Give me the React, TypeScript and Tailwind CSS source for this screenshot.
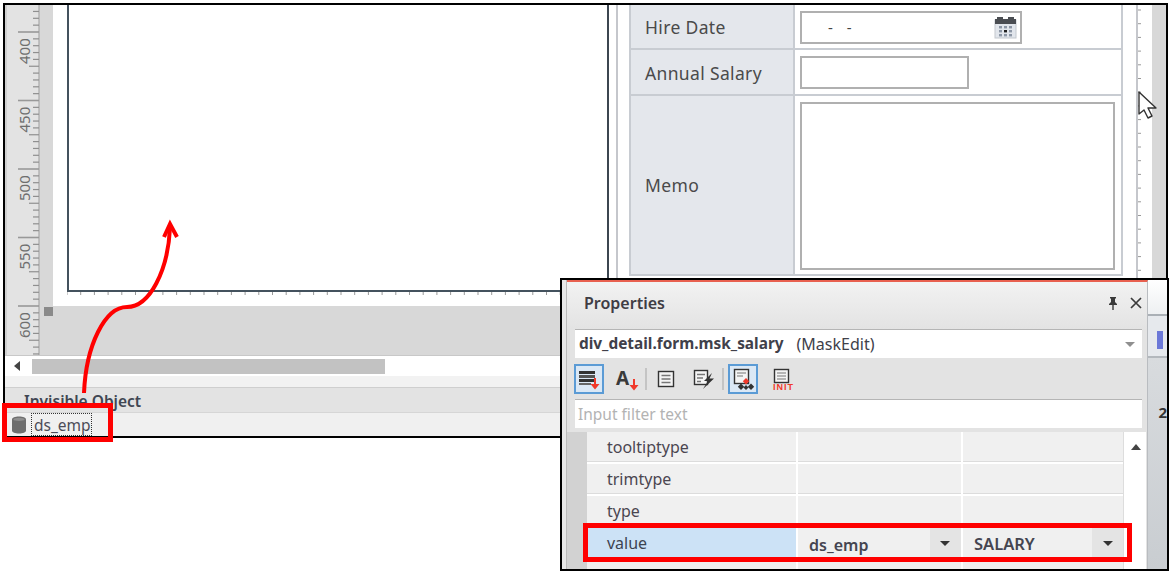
import React from "react";

function VRuler() {
  const ticks: React.ReactNode[] = [];
  for (let i = -3; i < 48; i++) {
    const y = 32 + i * 6.85;
    const major = i % 10 === 0;
    const mid = !major && i % 5 === 0;
    const x1 = major ? 13 : mid ? 24 : 28;
    ticks.push(<line key={i} x1={x1} x2={34} y1={y - 5} y2={y - 5} stroke={major ? "#999" : "#8f8f8f"} strokeWidth={major ? 1.6 : 1.2} />);
  }
  const labels = [400, 450, 500, 550, 600];
  return (
    <svg width="48" height="350" className="block shrink-0">
      <rect x="0" y="0" width="34" height="350" fill="#e3e3e3" />
      <rect x="34" y="0" width="14" height="350" fill="#d8d8d8" />
      <line x1="34" x2="34" y1="0" y2="350" stroke="#a8a8a8" strokeWidth="1.2" />
      <line x1="1" x2="1" y1="0" y2="350" stroke="#bdbdbd" />
      {ticks}
      {labels.map((l, i) => {
        const y = 59 + i * 68.5;
        return (
          <text key={l} x={24.5} y={y} transform={`rotate(-90 24.5 ${y})`} fontSize="15" fill="#6f6f6f" fontFamily="Noto Sans, sans-serif">
            {l}
          </text>
        );
      })}
    </svg>
  );
}

function Calendar() {
  return (
    <svg width="23" height="23" viewBox="0 0 23 23">
      <rect x="1" y="4" width="21" height="18" fill="#e2e6ec" stroke="#c3c8ce" />
      <rect x="1" y="3" width="21" height="5" fill="#4a4d52" />
      <rect x="3" y="1" width="6" height="3" fill="#4a4d52" />
      <rect x="14" y="1" width="6" height="3" fill="#4a4d52" />
      {[5, 10, 15].map((x) =>
        [10, 14, 18].map((y) => (
          <rect key={`${x}-${y}`} x={x} y={y} width="3" height="2.4" fill={x === 10 && y === 14 ? "#222" : "#8d97a6"} />
        ))
      )}
    </svg>
  );
}

function Cursor() {
  return (
    <svg width="22" height="30" viewBox="0 0 22 30" className="absolute left-[1137px] top-[90px]">
      <path d="M2 2 L2 24 L7 20 L11 28 L15 26 L11 18 L19 18 Z" fill="#fff" stroke="#333" strokeWidth="1.4" strokeLinejoin="round" />
    </svg>
  );
}

function RedDown({ x, y }: { x: number; y: number }) {
  return <path d={`M${x - 1} ${y} h2 v6 h3.5 l-4.5 5.5 l-4.5 -5.5 h3.5 z`} fill="#f0392b" />;
}

function Toolbar() {
  return (
    <div className="flex items-center h-[33px] ml-[7px] mt-[4px]">
      <div className="w-[30px] h-[30px] border-2 border-[#5b9bd5] bg-[#dbe8f5] flex items-center justify-center">
        <svg width="26" height="26" viewBox="0 0 26 26">
          <rect x="3" y="5" width="16" height="3" fill="#333" />
          <rect x="3" y="9" width="16" height="3" fill="#555" />
          <rect x="3" y="13" width="16" height="3" fill="#333" />
          <rect x="3" y="17" width="12" height="2" fill="#666" />
          <RedDown x={19} y={12} />
        </svg>
      </div>
      <svg width="28" height="28" viewBox="0 0 28 28" className="ml-[11px]">
        <text x="1" y="20" fontSize="19" fontWeight="700" fill="#3a3a3a" fontFamily="Noto Sans, sans-serif">A</text>
        <RedDown x={19} y={14} />
      </svg>
      <div className="w-[2px] h-[22px] bg-[#c4c4c4] ml-[2px]" />
      <svg width="20" height="20" viewBox="0 0 20 20" className="ml-[9px]">
        <rect x="2.5" y="2.5" width="15" height="15" fill="#f4f4f4" stroke="#333" strokeWidth="1.4" />
        <path d="M5.5 6.5h9M5.5 10h9M5.5 13.5h9" stroke="#777" strokeWidth="1.3" />
      </svg>
      <svg width="22" height="22" viewBox="0 0 22 22" className="ml-[17px]">
        <rect x="1.5" y="2.5" width="13" height="14" fill="#f4f4f4" stroke="#333" strokeWidth="1.4" />
        <path d="M4 6.5h8M4 10h6M4 13.5h4" stroke="#777" strokeWidth="1.3" />
        <path d="M19 5 L11 13 H15 L10 21 L21 10.5 H16.5 Z" fill="#333" />
      </svg>
      <div className="w-[2px] h-[22px] bg-[#c4c4c4] ml-[7px]" />
      <div className="w-[30px] h-[30px] border-2 border-[#5b9bd5] bg-[#dbe8f5] flex items-center justify-center ml-[4px]">
        <svg width="26" height="26" viewBox="0 0 26 26">
          <rect x="4.5" y="3.5" width="14" height="14" fill="#f4f4f4" stroke="#333" strokeWidth="1.4" />
          <path d="M7 7h9M7 10h6" stroke="#777" strokeWidth="1.2" />
          <path d="M16 12l3.2 3.2-3.2 3.2-3.2-3.2z" fill="#f0392b" />
          <path d="M11 17.5l3.2 3.2-3.2 3.2-3.2-3.2zM21 17.5l3.2 3.2-3.2 3.2-3.2-3.2zM16 19l2.5 2.5-2.5 2.5-2.5-2.5z" fill="#333" />
        </svg>
      </div>
      <svg width="24" height="24" viewBox="0 0 24 24" className="ml-[13px]">
        <rect x="3.5" y="2.5" width="14" height="13" fill="#f4f4f4" stroke="#333" strokeWidth="1.4" />
        <path d="M6 6h9M6 9h9M6 12h9" stroke="#777" strokeWidth="1.2" />
        <text x="2" y="23" fontSize="9" fontWeight="700" fill="#f0392b" textLength="20" fontFamily="Liberation Sans, sans-serif">INIT</text>
      </svg>
    </div>
  );
}

function Caret({ color = "#333" }: { color?: string }) {
  return <div className="w-0 h-0 border-l-[5px] border-r-[5px] border-t-[5px] border-l-transparent border-r-transparent" style={{ borderTopColor: color }} />;
}

function PropRow({ name }: { name: string }) {
  return (
    <div className="flex h-[30px] gap-[2px]">
      <div className="w-[209px] bg-[#f0f0f0] border-b border-[#dcdcdc] pl-[20px] pt-[1px] flex items-center text-[16px] text-[#4b4650]">{name}</div>
      <div className="w-[163px] bg-[#f0f0f0] border-b border-[#dcdcdc]" />
      <div className="flex-1 bg-[#f0f0f0] border-b border-[#dcdcdc]" />
    </div>
  );
}

function ValCell({ text, w, size }: { text: string; w: string; size: string }) {
  return (
    <div className={`${w} bg-[#f0f0f0] flex items-stretch`}>
      <div className={`flex-1 pl-[11px] flex items-center ${size} font-semibold text-[#454550] pt-[3px]`}>{text}</div>
      <div className="w-[31px] bg-[#e4e4e4] flex items-center justify-center"><Caret /></div>
    </div>
  );
}

function Properties() {
  return (
    <div className="absolute left-[560px] top-[278px] w-[609px] h-[293px] border-2 border-black bg-[#c9cdd1] flex">
      <div className="w-[5px] bg-[#e8e8e8] border-r border-[#bbbbbb]" />
      <div className="w-[584px] bg-[#e3e3e3] border-t-2 border-[#e8604f] border-r border-r-[#b9bcc0] flex flex-col">
        <div className="h-[47px] bg-gradient-to-b from-[#f2f2f2] to-[#e3e3e3] flex items-center justify-between pl-[17px] pr-[9px] pb-[6px]">
          <span className="text-[16px] font-semibold text-[#3f3d44] leading-none">Properties</span>
          <div className="flex items-center gap-[9px] mr-[-5px]">
            <svg width="14" height="14" viewBox="0 0 14 14">
              <path d="M4 1h6v1l-1 1v3l2 2v1H3V8l2-2V3L4 2zM6.3 9h1.4v5H6.3z" fill="#3a3a3a" />
            </svg>
            <svg width="14" height="14" viewBox="0 0 14 14">
              <path d="M2 2l10 10M12 2L2 12" stroke="#3a3a3a" strokeWidth="1.7" />
            </svg>
          </div>
        </div>
        <div className="ml-[8px] mr-[5px] h-[29px] bg-white border-t border-[#b5b5b5] flex items-center pl-[4px] pr-[7px] text-[#40404a]">
          <span className="font-bold text-[15.4px]">div_detail.form.msk_salary</span>
          <span className="ml-[13px] text-[16px]">(MaskEdit)</span>
          <div className="ml-auto"><Caret color="#8f8f8f" /></div>
        </div>
        <Toolbar />
        <div className="ml-[8px] mr-[5px] mt-[4px] h-[29px] bg-white border-t border-[#b5b5b5] flex items-center pl-[3px] pt-[1px] text-[15.5px] text-[#b3b3b3]">Input filter text</div>
        <div className="flex flex-1 mt-[4px] overflow-hidden">
          <div className="w-[20px] bg-[#d2d2d2]" />
          <div className="flex-1 bg-white flex flex-col gap-[2px]">
            <PropRow name="tooltiptype" />
            <PropRow name="trimtype" />
            <PropRow name="type" />
            <div className="flex h-[30px] gap-[2px]">
              <div className="w-[209px] bg-[#cce2f6] pl-[20px] flex items-center text-[16px] text-[#3d4450]">value</div>
              <ValCell text="ds_emp" w="w-[163px]" size="text-[16px]" />
              <ValCell text="SALARY" w="flex-1" size="text-[16.5px]" />
            </div>
            <div className="flex flex-1 gap-[2px]">
              <div className="w-[209px] bg-[#f0f0f0]" />
              <div className="w-[163px] bg-[#f0f0f0]" />
              <div className="flex-1 bg-[#f0f0f0]" />
            </div>
          </div>
          <div className="w-[23px] bg-white pt-[12px] pl-[1px] flex justify-center shrink-0 border-l border-[#dddddd] mr-[1px]">
            <div className="w-0 h-0 border-l-[5px] border-r-[5px] border-b-[6px] border-l-transparent border-r-transparent border-b-[#444]" />
          </div>
        </div>
      </div>
      <div className="flex-1 flex flex-col">
        <div className="h-[36px] bg-gradient-to-b from-[#ffffff] to-[#eef0f2] border-b-2 border-[#aab0b6]" />
        <div className="h-[42px] bg-[#e6e9ed] border-b-2 border-[#b3b8bd] pt-[15px]">
          <div className="ml-[9px] w-[6px] h-[18px] bg-[#6b78d8]" />
        </div>
        <div className="flex-1 bg-gradient-to-b from-[#d8dbde] to-[#c9cdd1] pl-[10px] pt-[47px] text-[15px] font-bold text-[#333] leading-none overflow-hidden">2</div>
      </div>
    </div>
  );
}

function LeftPane() {
  const ticks = Array.from({ length: 40 }, (_, i) => i * 13.7);
  return (
    <div className="w-[602px] shrink-0 flex flex-col">
      <div className="flex h-[350px]">
        <VRuler />
        <div className="flex-1 flex flex-col">
          <div className="h-[301px] bg-white pl-[14px]">
            <div className="h-[287px] border-l-2 border-b-2 border-[#44525e]" />
            <svg width="540" height="4" className="block">
              {ticks.map((t) => (
                <line key={t} x1={t} x2={t} y1="0" y2="3" stroke="#999" />
              ))}
            </svg>
          </div>
          <div className="flex-1 bg-[#d8d8d8]" />
        </div>
      </div>
      <div className="h-[22px] bg-white border-t border-[#c8c8c8] flex items-center pl-[5px]">
        <div className="w-[14px] flex justify-center">
          <div className="w-0 h-0 border-t-[5px] border-b-[5px] border-r-[6px] border-t-transparent border-b-transparent border-r-[#444]" />
        </div>
        <div className="ml-[8px] w-[353px] h-[15px] bg-[#c2c2c2]" />
      </div>
      <div className="h-[11px] bg-[#f2f2f2]" />
      <div className="h-[25px] bg-[#e3e3e3] border-t border-[#cfcfcf] pl-[19px] pt-[3px] flex items-center text-[15.5px] font-semibold text-[#3f4652]">Invisible Object</div>
      <div className="flex-1 bg-[#f0f0f0] border-t border-[#d6d6d6] flex items-center pl-[7px]">
        <svg width="14" height="18" viewBox="0 0 14 18" className="shrink-0">
          <path d="M0 3.5C0 1.5 3 0.5 7 0.5S14 1.5 14 3.5V14.5C14 16.5 11 17.5 7 17.5S0 16.5 0 14.5Z" fill="#6e6e6e" />
          <ellipse cx="7" cy="3.4" rx="5.6" ry="1.7" fill="#8f8f8f" />
        </svg>
        <div className="ml-[5px] h-[23px] w-[61px] border border-dotted border-[#333] flex items-center pl-[2px] pt-[2px] text-[15.5px] text-[#4c4c58]">ds_emp</div>
      </div>
    </div>
  );
}

function FormRow({ label, h, pt, children }: { label: string; h: string; pt: string; children: React.ReactNode }) {
  return (
    <div className={`flex ${h} border-b-2 border-[#c8ccd2]`}>
      <div className={`w-[164px] bg-[#e4e7ec] border-r-2 border-[#c8ccd2] pl-[14px] ${pt} flex items-center text-[17.5px] tracking-[0.35px] text-[#4a4a4a]`}>{label}</div>
      <div className="flex-1 bg-white pl-[5px]">{children}</div>
    </div>
  );
}

function RightPane() {
  return (
    <div className="flex-1 flex bg-white border-l-2 border-[#3c4650]">
      <div className="w-[7px]" />
      <div className="w-[2px] bg-[#c5c7cc]" />
      <div className="w-[11px]" />
      <div className="w-[494px] h-[271px] border-l-2 border-r-2 border-[#c8ccd2]">
        <FormRow label="Hire Date" h="h-[45px]" pt="pt-[2px]">
          <div className="mt-[6px] w-[222px] h-[33px] border-2 border-[#b0b0b0] flex items-center justify-between pl-[26px] pr-[3px] text-[#444]">
            <span className="text-[15px] tracking-[5px]">- -</span>
            <Calendar />
          </div>
        </FormRow>
        <FormRow label="Annual Salary" h="h-[46px]" pt="pt-[2px]">
          <div className="mt-[6px] w-[169px] h-[33px] border-2 border-[#b0b0b0]" />
        </FormRow>
        <FormRow label="Memo" h="h-[180px]" pt="pt-0">
          <div className="mt-[6px] w-[315px] h-[168px] border-2 border-[#b0b0b0]" />
        </FormRow>
      </div>
      <div className="w-[13px]" />
      <svg width="16" height="431" className="block shrink-0 border-l-2 border-[#c5c7cc]">
        {Array.from({ length: 30 }, (_, i) => (
          <line key={i} x1="0" x2="3" y1={5 + i * 13.7} y2={5 + i * 13.7} stroke="#999" />
        ))}
      </svg>
      <div className="flex-1 bg-[#d8d8d8]" />
    </div>
  );
}

export default function App() {
  return (
    <div className="relative w-[1171px] h-[572px] bg-white overflow-hidden [font-family:'Noto_Sans',sans-serif]">
      <div className="ml-[3px] mt-[3px] w-[1165px] h-[435px] border-2 border-black flex relative">
        <LeftPane />
        <RightPane />
      </div>
      <div className="absolute left-[44px] top-[307px] w-[9px] h-[9px] bg-[#8a8a8a]" />
      <Cursor />
      <Properties />
      <div className="absolute left-[2px] top-[403px] w-[111px] h-[39px] border-[5px] border-[#ff0000]" />
      <div className="absolute left-[583px] top-[523px] w-[549px] h-[39px] border-[5px] border-[#ff0000]" />
      <svg width="1171" height="572" className="absolute left-0 top-0 pointer-events-none">
        <path d="M84 393 C 86 345, 105 307, 127 307 C 150 307, 168 270, 170 228" fill="none" stroke="#ff0000" strokeWidth="4" />
        <path d="M164 237 L170 224 L177 237" fill="none" stroke="#ff0000" strokeWidth="4" />
      </svg>
    </div>
  );
}
